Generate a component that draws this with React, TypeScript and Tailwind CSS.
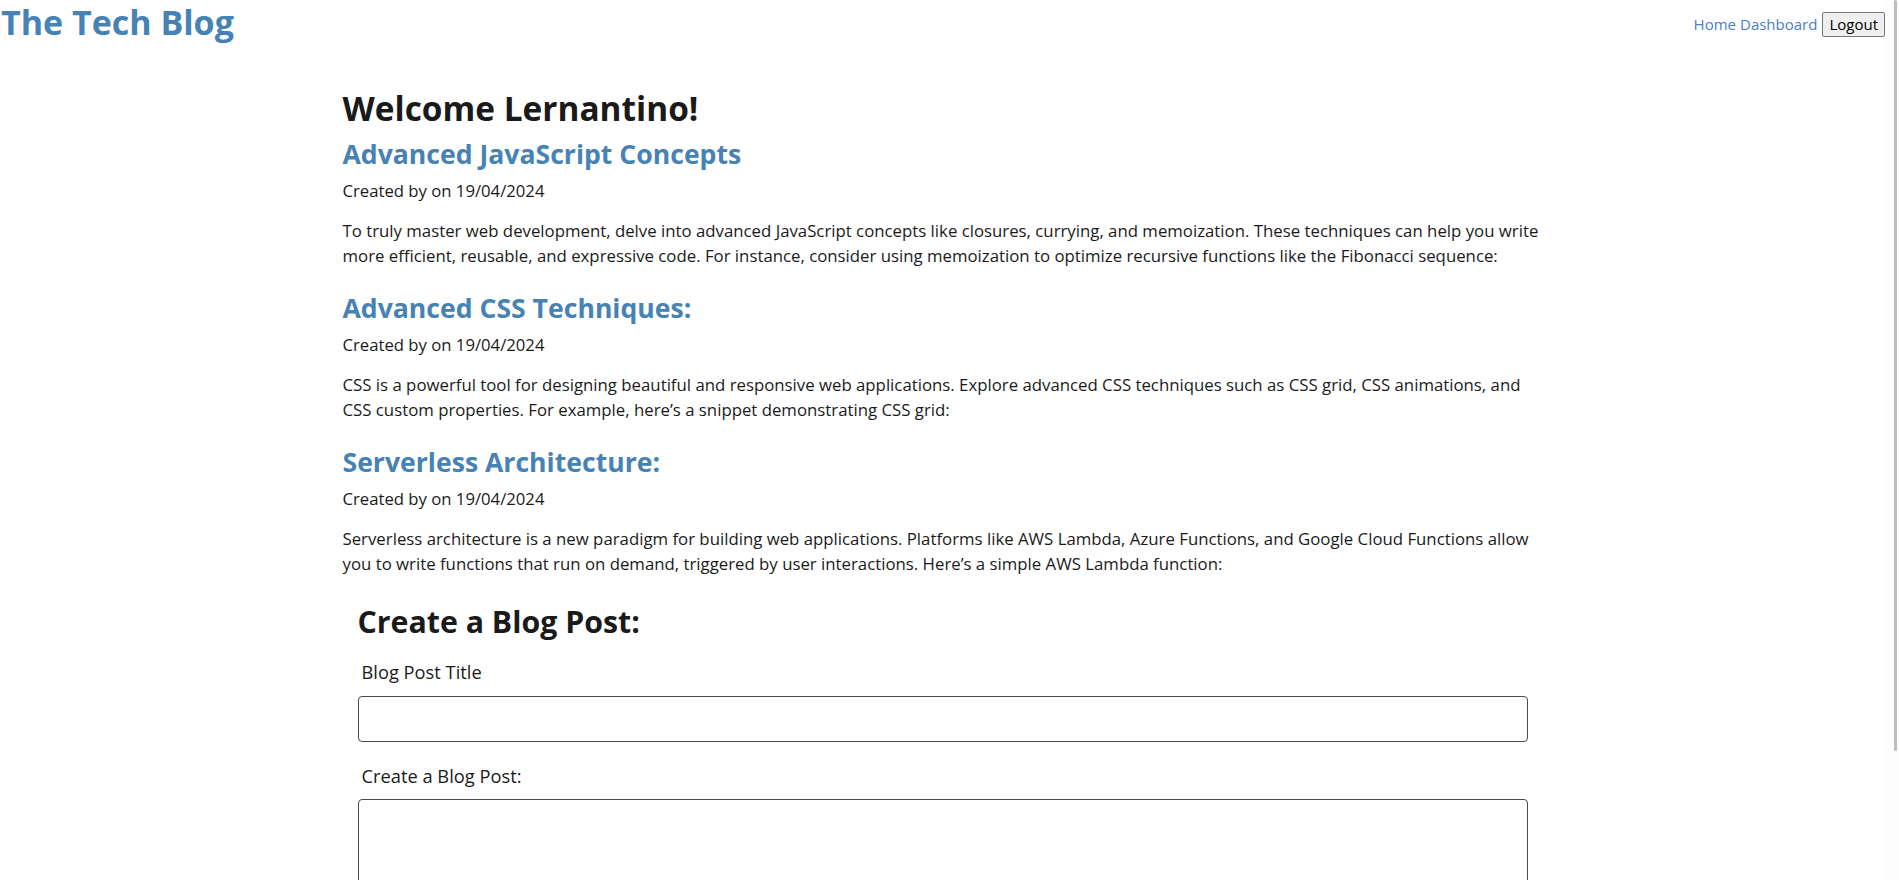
import React from "react"

const posts = [
  {
    title: "Advanced JavaScript Concepts",
    date: "19/04/2024",
    body: "To truly master web development, delve into advanced JavaScript concepts like closures, currying, and memoization. These techniques can help you write more efficient, reusable, and expressive code. For instance, consider using memoization to optimize recursive functions like the Fibonacci sequence:",
  },
  {
    title: "Advanced CSS Techniques:",
    date: "19/04/2024",
    body: "CSS is a powerful tool for designing beautiful and responsive web applications. Explore advanced CSS techniques such as CSS grid, CSS animations, and CSS custom properties. For example, here\u2019s a snippet demonstrating CSS grid:",
  },
  {
    title: "Serverless Architecture:",
    date: "19/04/2024",
    body: "Serverless architecture is a new paradigm for building web applications. Platforms like AWS Lambda, Azure Functions, and Google Cloud Functions allow you to write functions that run on demand, triggered by user interactions. Here\u2019s a simple AWS Lambda function:",
  },
]

export default function App() {
  return (
    <div className="flex h-[880px] w-full overflow-hidden bg-white font-['Open_Sans',sans-serif] text-[#1a1a1a]">
      <div className="flex min-w-0 flex-1 flex-col">
        {/* Header */}
        <header className="flex items-start justify-between">
          <h1 className="pl-[1px] text-[34px] font-bold leading-[45px] text-[#4682b4]">The Tech Blog</h1>
          <nav className="flex items-center gap-[4px] pt-[12px] text-[15px]">
            <a href="#" className="leading-[25px] text-[#4a80c8]">Home</a>
            <a href="#" className="leading-[25px] text-[#4a80c8]">Dashboard</a>
            <button className="ml-[1px] h-[25px] rounded-[2px] border border-[#767676] bg-[#efefef] px-[6px] text-[15px] leading-[23px] text-black">
              Logout
            </button>
          </nav>
        </header>

        {/* Dashboard */}
        <main className="mx-auto mt-[43px] w-[1200px]">
          <h2 className="text-[33.4px] font-bold leading-[40px]">Welcome Lernantino!</h2>

          <div className="mt-[10px] flex flex-col gap-[23.5px]">
            {posts.map((post) => (
              <article key={post.title}>
                <h3 className="text-[26.6px] font-bold leading-[32px] text-[#4682b4]">
                  <a href="#">{post.title}</a>
                </h3>
                <p className="mt-[9px] text-[16.7px] leading-[24px]">Created by on {post.date}</p>
                <p className="mt-[14.5px] text-[16.8px] leading-[25.5px]">{post.body}</p>
              </article>
            ))}
          </div>

          {/* New post form */}
          <form className="mt-[25px] px-[15px]">
            <h2 className="text-[30.3px] font-bold leading-[40px]">Create a Blog Post:</h2>
            <label className="mt-[18px] block pl-[4px] text-[18.3px] leading-[24px]">Blog Post Title</label>
            <input className="mt-[12px] block h-[46px] w-full rounded-[4px] border border-[#4b4b4b]" />
            <label className="mt-[22px] block pl-[4px] text-[18.3px] leading-[24px]">Create a Blog Post:</label>
            <textarea className="mt-[11px] block h-[160px] w-full resize-none rounded-[4px] border border-[#4b4b4b]" />
          </form>
        </main>
      </div>

      {/* Scrollbar */}
      <div className="flex w-[14px] shrink-0 justify-end bg-[#fdfdfd] pr-[2px]">
        <div className="h-[751px] w-[3px] rounded-full bg-[#bdbdbd]" />
      </div>
    </div>
  )
}
